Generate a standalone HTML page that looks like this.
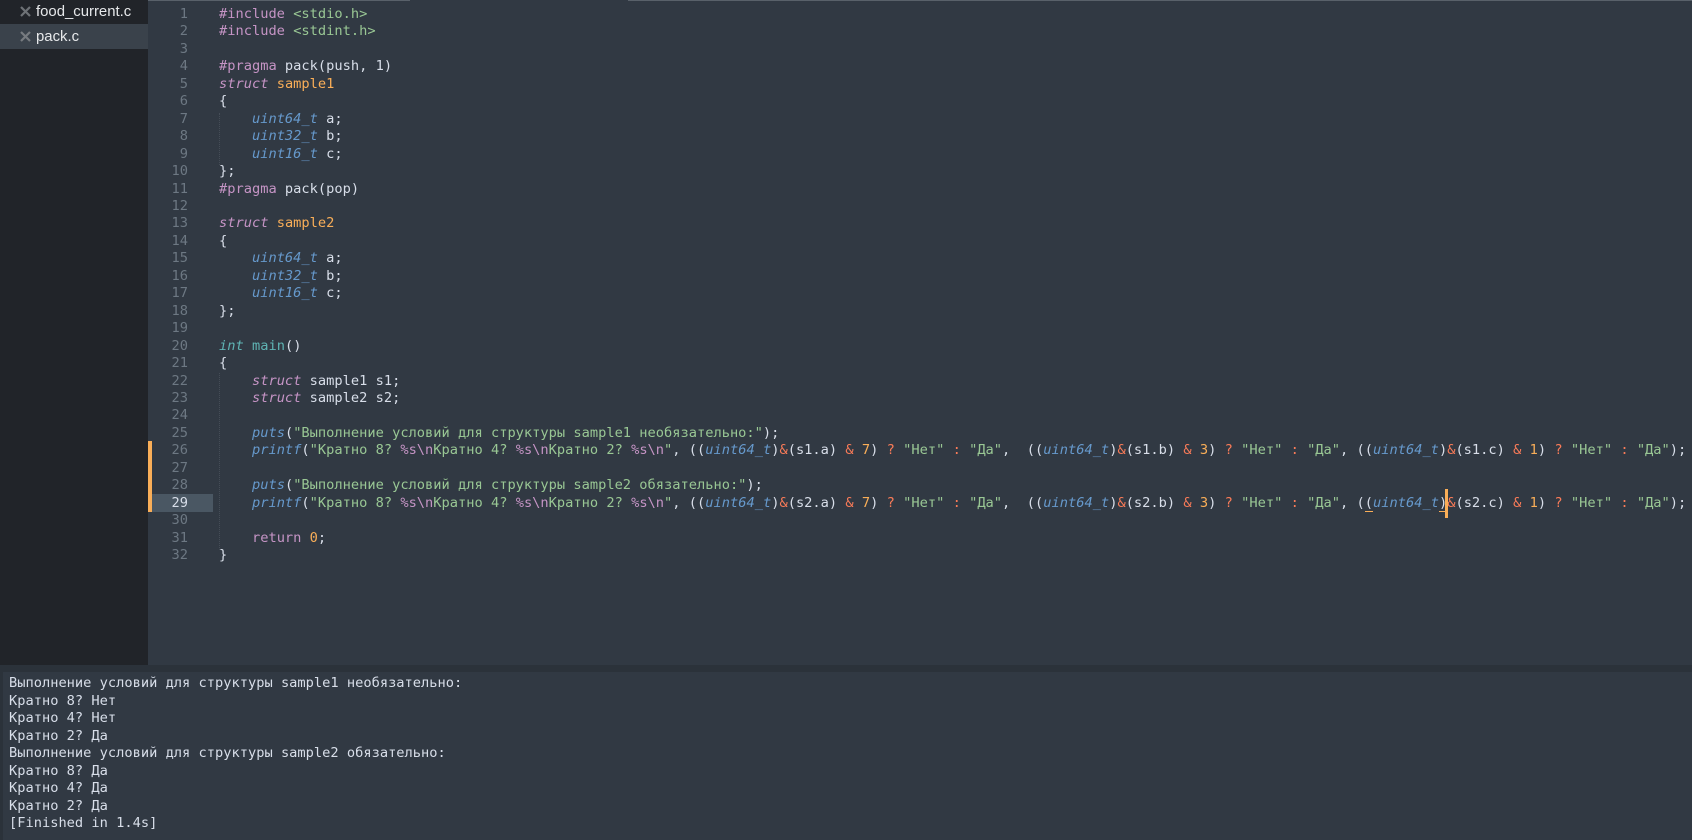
<!DOCTYPE html>
<html><head><meta charset="utf-8"><style>
html,body{margin:0;padding:0;width:1692px;height:840px;overflow:hidden;background:#313943}
#side{position:absolute;left:0;top:0;width:148px;height:665px;background:#212429}
#sel{position:absolute;left:0;top:24px;width:148px;height:25px;background:#3a424b}
.f{position:absolute;left:36px;font:14.9px/20px "Liberation Sans",sans-serif;color:#e6e8ea}
.x{position:absolute;left:20px;width:11px;height:11px}
#top1{position:absolute;left:148px;top:0;width:262px;height:1px;background:#59616a}
#top2{position:absolute;left:628px;top:0;width:1064px;height:1px;background:#59616a}
#hl{position:absolute;left:148px;top:494px;width:65px;height:18px;background:#4a5763}
#bar{position:absolute;left:148px;top:441px;width:4px;height:71px;background:#f9ae58}
#gut{position:absolute;left:148px;top:6px;width:40px;text-align:right;color:#6d7883}
#gut b{font-weight:normal;color:#d8dee9}
#code{position:absolute;left:219px;top:6px;color:#d8dee9}
#gut,#code{font:13.69px/17.46px "DejaVu Sans Mono",monospace;white-space:pre}
.g{position:absolute;left:219px;width:0;border-left:1px dotted #454d57}
#strip{position:absolute;left:0;top:665px;width:1692px;height:7px;background:#2b323a}
#pl{position:absolute;left:0;top:672px;width:3px;height:168px;background:#2b323a}
#out{position:absolute;left:9px;top:675px;font:13.69px/17.5px "DejaVu Sans Mono",monospace;white-space:pre;color:#d8dee9}
.k{color:#c594c5}.si{color:#c594c5;font-style:italic}.o{color:#f9ae58}.t{color:#6699cc;font-style:italic}
.s{color:#99c794}.r{color:#f97b58}.c{color:#5fb4b4;font-style:italic}.m{color:#5fb4b4}
.u{border-bottom:1px solid #f9ae58}
#caret{position:relative;display:inline-block;width:0;height:0}
#caret:after{content:"";position:absolute;left:-2px;top:-18px;width:3px;height:29px;background:#f9ae58}
</style></head><body>
<div id="side"></div><div id="sel"></div>
<svg class="x" style="top:6px" viewBox="0 0 11 11"><path d="M1 1L10 10M10 1L1 10" stroke="#6e7276" stroke-width="2.2"/></svg>
<svg class="x" style="top:31px" viewBox="0 0 11 11"><path d="M1 1L10 10M10 1L1 10" stroke="#777b80" stroke-width="2.2"/></svg>
<div class="f" style="top:2px">food_current.c</div>
<div class="f" style="top:27px">pack.c</div>
<div id="top1"></div><div id="top2"></div>
<div id="hl"></div><div id="bar"></div>
<div class="g" style="top:113px;height:52px"></div>
<div class="g" style="top:373px;height:177px"></div>
<div id="gut">1
2
3
4
5
6
7
8
9
10
11
12
13
14
15
16
17
18
19
20
21
22
23
24
25
26
27
28
<b>29</b>
30
31
32</div>
<div id="code"><span class="k">#include</span> <span class="s">&lt;stdio.h&gt;</span>
<span class="k">#include</span> <span class="s">&lt;stdint.h&gt;</span>

<span class="k">#pragma</span> pack(push, 1)
<span class="si">struct</span> <span class="o">sample1</span>
{
    <span class="t">uint64_t</span> a;
    <span class="t">uint32_t</span> b;
    <span class="t">uint16_t</span> c;
};
<span class="k">#pragma</span> pack(pop)

<span class="si">struct</span> <span class="o">sample2</span>
{
    <span class="t">uint64_t</span> a;
    <span class="t">uint32_t</span> b;
    <span class="t">uint16_t</span> c;
};

<span class="c">int</span> <span class="m">main</span>()
{
    <span class="si">struct</span> sample1 s1;
    <span class="si">struct</span> sample2 s2;

    <span class="t">puts</span>(<span class="s">"Выполнение условий для структуры sample1 необязательно:"</span>);
    <span class="t">printf</span>(<span class="s">"Кратно 8? </span><span class="k">%s\n</span><span class="s">Кратно 4? </span><span class="k">%s\n</span><span class="s">Кратно 2? </span><span class="k">%s\n</span><span class="s">"</span>, ((<span class="t">uint64_t</span>)<span class="r">&amp;</span>(s1.a) <span class="r">&amp;</span> <span class="o">7</span>) <span class="r">?</span> <span class="s">"Нет"</span> <span class="r">:</span> <span class="s">"Да"</span>,  ((<span class="t">uint64_t</span>)<span class="r">&amp;</span>(s1.b) <span class="r">&amp;</span> <span class="o">3</span>) <span class="r">?</span> <span class="s">"Нет"</span> <span class="r">:</span> <span class="s">"Да"</span>, ((<span class="t">uint64_t</span>)<span class="r">&amp;</span>(s1.c) <span class="r">&amp;</span> <span class="o">1</span>) <span class="r">?</span> <span class="s">"Нет"</span> <span class="r">:</span> <span class="s">"Да"</span>);

    <span class="t">puts</span>(<span class="s">"Выполнение условий для структуры sample2 обязательно:"</span>);
    <span class="t">printf</span>(<span class="s">"Кратно 8? </span><span class="k">%s\n</span><span class="s">Кратно 4? </span><span class="k">%s\n</span><span class="s">Кратно 2? </span><span class="k">%s\n</span><span class="s">"</span>, ((<span class="t">uint64_t</span>)<span class="r">&amp;</span>(s2.a) <span class="r">&amp;</span> <span class="o">7</span>) <span class="r">?</span> <span class="s">"Нет"</span> <span class="r">:</span> <span class="s">"Да"</span>,  ((<span class="t">uint64_t</span>)<span class="r">&amp;</span>(s2.b) <span class="r">&amp;</span> <span class="o">3</span>) <span class="r">?</span> <span class="s">"Нет"</span> <span class="r">:</span> <span class="s">"Да"</span>, (<span class="u">(</span><span class="t">uint64_t</span><span class="u">)</span><span id="caret"></span><span class="r">&amp;</span>(s2.c) <span class="r">&amp;</span> <span class="o">1</span>) <span class="r">?</span> <span class="s">"Нет"</span> <span class="r">:</span> <span class="s">"Да"</span>);

    <span class="k">return</span> <span class="o">0</span>;
}</div>
<div id="strip"></div><div id="pl"></div>
<div id="out">Выполнение условий для структуры sample1 необязательно:
Кратно 8? Нет
Кратно 4? Нет
Кратно 2? Да
Выполнение условий для структуры sample2 обязательно:
Кратно 8? Да
Кратно 4? Да
Кратно 2? Да
[Finished in 1.4s]</div>
</body></html>
